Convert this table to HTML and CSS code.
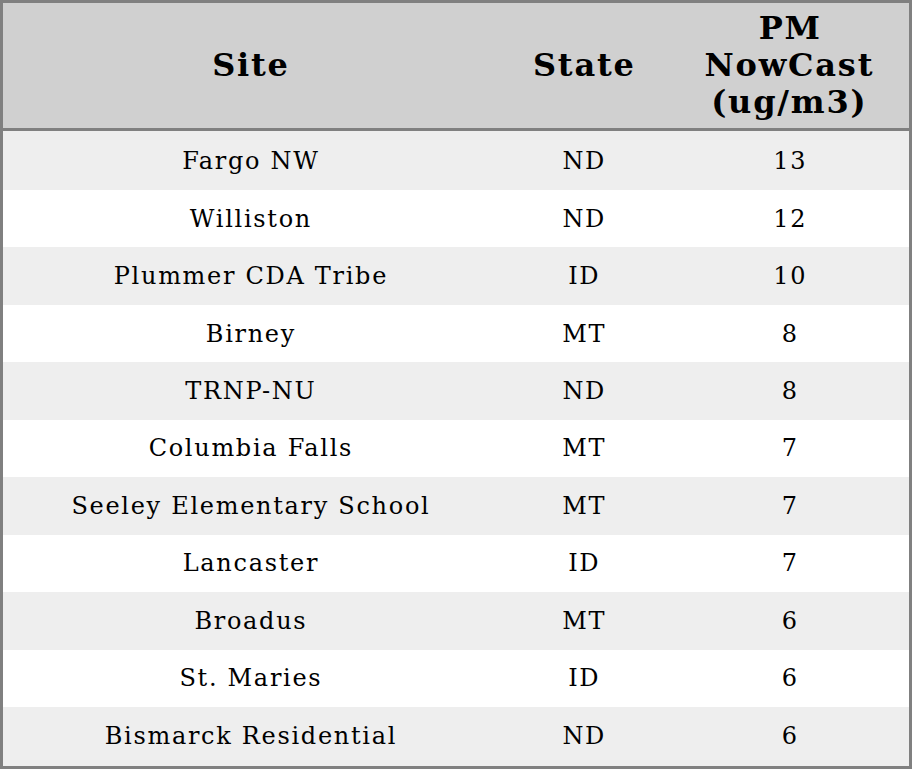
FILE: index.html
```html
<!DOCTYPE html>
<html>
<head>
<meta charset="utf-8">
<link rel="stylesheet" href="styles.css">
</head>
<body>
<table class="aq-table">
  <colgroup>
    <col class="col-site">
    <col class="col-state">
    <col class="col-pm">
  </colgroup>
  <thead>
    <tr class="head-row">
      <th>Site</th>
      <th>State</th>
      <th>PM<br>NowCast<br>(ug/m3)</th>
    </tr>
  </thead>
  <tbody>
    <tr><td>Fargo NW</td><td>ND</td><td>13</td></tr>
    <tr><td>Williston</td><td>ND</td><td>12</td></tr>
    <tr><td>Plummer CDA Tribe</td><td>ID</td><td>10</td></tr>
    <tr><td>Birney</td><td>MT</td><td>8</td></tr>
    <tr><td>TRNP-NU</td><td>ND</td><td>8</td></tr>
    <tr><td>Columbia Falls</td><td>MT</td><td>7</td></tr>
    <tr><td>Seeley Elementary School</td><td>MT</td><td>7</td></tr>
    <tr><td>Lancaster</td><td>ID</td><td>7</td></tr>
    <tr><td>Broadus</td><td>MT</td><td>6</td></tr>
    <tr><td>St. Maries</td><td>ID</td><td>6</td></tr>
    <tr><td>Bismarck Residential</td><td>ND</td><td>6</td></tr>
  </tbody>
</table>
</body>
</html>
```

FILE: styles.css
```css
html, body {
  margin: 0;
  padding: 0;
  background: #ffffff;
}

.aq-table {
  width: 912px;
  height: 769px;
  border-collapse: collapse;
  border: 3px solid #808080;
  table-layout: fixed;
  font-family: "DejaVu Serif", serif;
  color: #000000;
}

.col-site { width: 494px; }
.col-state { width: 172px; }
.col-pm { width: 240px; }

.head-row th {
  height: 125px;
  padding: 0;
  background: #d0d0d0;
  border-bottom: 3px solid #808080;
  font-size: 32px;
  font-weight: bold;
  line-height: 37px;
  letter-spacing: 1.8px;
  text-indent: 1.8px;
  text-align: center;
  vertical-align: middle;
}

.aq-table td {
  padding: 0 0 0 1.7px;
  font-size: 24px;
  letter-spacing: 1.7px;
  text-align: center;
  vertical-align: middle;
}

.aq-table tbody tr:nth-child(odd) {
  background: #eeeeee;
}

.aq-table tbody tr:nth-child(even) {
  background: #ffffff;
}
```
